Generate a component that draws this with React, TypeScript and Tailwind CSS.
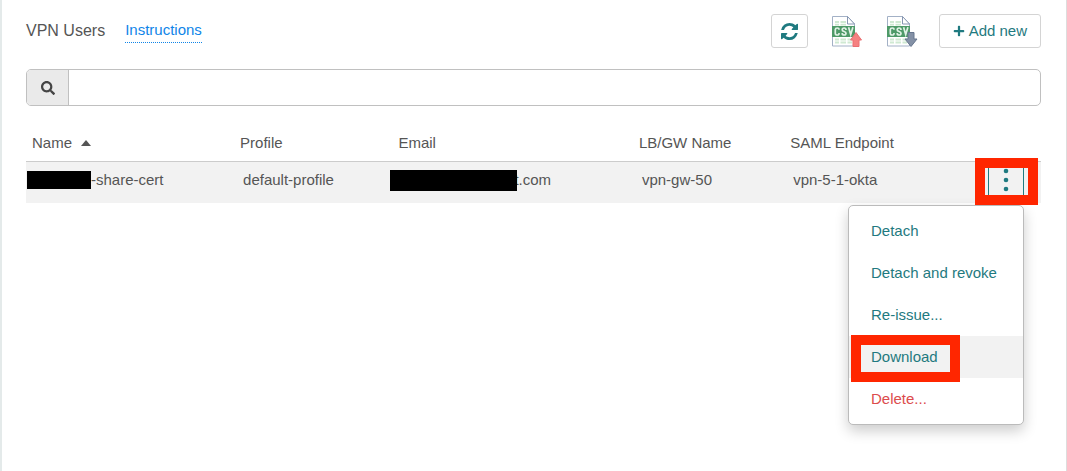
import { FaPlus, FaSearch } from "react-icons/fa";

const actions = ["Detach", "Detach and revoke", "Re-issue...", "Download", "Delete..."];

function RefreshIcon() {
  return (
    <svg viewBox="0 0 1536 1536" className="size-[17px]" fill="currentColor" aria-hidden="true">
      <path d="M1511 928q0 5-1 7-64 268-268 434.500T764 1536q-146 0-282.500-55T238 1324l-129 129q-19 19-45 19t-45-19-19-45V960q0-26 19-45t45-19h448q26 0 45 19t19 45-19 45l-137 137q71 66 161 102t187 36q134 0 250-65t186-179q11-17 53-117 8-23 30-23h192q13 0 22.500 9.500t9.500 22.500zm25-800v448q0 26-19 45t-45 19h-448q-26 0-45-19t-19-45 19-45l138-138Q969 256 768 256q-134 0-250 65T332 500q-11 17-53 117-8 23-30 23H50q-13 0-22.500-9.500T18 608v-7q65-268 270-434.500T768 0q146 0 284 55.500T1297 212l130-129q19-19 45-19t45 19 19 45z" />
    </svg>
  );
}

function CsvIcon({ direction }: { direction: "up" | "down" }) {
  return (
    <svg viewBox="0 0 32 33" className="h-[33px] w-8" aria-hidden="true">
      <path d="M1.500 1.500h15l7 7.500v22h-22z" fill="#fff" stroke="#a3b1c6" />
      <path d="M4 6h4v2H4zM9.500 6H15v2H9.500zM4 8.700h4v1.800H4zM9.500 8.700H15v1.800H9.500zM4 23.500h4v2H4zM9.500 23.500H15v2H9.500zM16.500 23.500H21v2h-4.500zM4 26.500h4v2H4zM9.500 26.500H15v2H9.500zM16.500 26.500H21v2h-4.500z" fill="#cfe9d2" />
      <path d="M16.500 1.500V9h7z" fill="#fff" stroke="#8797b2" strokeLinejoin="round" />
      <path d="M1 11h23v11H1z" fill="#4e9a68" />
      <g fill="none" stroke="#e0f1e5" strokeWidth="1.700">
        <path d="M8 14.800v-.4q0-1.400-1.800-1.400t-1.900 1.600v3.800q0 1.600 1.900 1.600T8 18.600v-.6" />
        <path d="M15 14.900q0-1.900-1.900-1.900t-1.900 1.700q0 1.300 1.900 1.800t1.900 1.800q0 1.700-1.900 1.700t-2-1.900" />
        <path d="m17.600 12.300 2.100 7.200 2.200-7.200" />
      </g>
      {direction === "up" ? (
        <path d="m25 17.500 5.500 7.500H28v6.500h-6V25h-2.500z" fill="#f58181" stroke="#ea6e72" />
      ) : (
        <path d="M22 17.500h6V24h3l-6 7.500-6-7.500h3z" fill="#8491a6" stroke="#66768e" />
      )}
    </svg>
  );
}

export default function App() {
  return (
    <div className="min-h-screen bg-[#e4eaea] pl-[2px] font-['Liberation_Sans',Arial,sans-serif] text-[15px] leading-5 text-[#555]">
      <main className="min-h-screen border-r border-[#ddd] bg-white pt-[14px] pr-[25px] pl-6">
        <header className="flex h-[34px] items-center">
          <h1 className="text-base">VPN Users</h1>
          <a href="#instructions" className="ml-5 border-b border-dotted border-[#0f85e8] pb-[2px] text-[#0f85e8]">
            Instructions
          </a>
          <div className="ml-auto flex items-center">
            <button type="button" aria-label="Refresh" className="flex h-[34px] w-[37px] items-center justify-center rounded-[3px] border border-[#d4d4d4] text-[#1f7a80]">
              <RefreshIcon />
            </button>
            <button type="button" aria-label="Import CSV" className="ml-[23px]">
              <CsvIcon direction="up" />
            </button>
            <button type="button" aria-label="Export CSV" className="ml-[23px]">
              <CsvIcon direction="down" />
            </button>
            <button type="button" className="ml-[21px] flex h-[34px] items-center gap-1 rounded-[3px] border border-[#d4d4d4] px-[13px] text-[#1f7a80]">
              <FaPlus className="size-3" />
              Add new
            </button>
          </div>
        </header>

        <div className="mt-[21px] flex h-[37px] overflow-hidden rounded-[5px] border border-[#c0c0c0]">
          <label htmlFor="search" aria-label="Search" className="flex w-[42px] items-center justify-center border-r border-[#c0c0c0] bg-[#eaeaea] text-[#444]">
            <FaSearch className="size-[14px]" />
          </label>
          <input id="search" type="text" className="min-w-0 flex-1 px-3 outline-none" />
        </div>

        <table className="mt-5 w-full table-fixed text-left">
          <colgroup>
            <col className="w-[20.5%]" />
            <col className="w-[15.6%]" />
            <col className="w-[23.7%]" />
            <col className="w-[14.9%]" />
            <col />
            <col className="w-[66px]" />
          </colgroup>
          <thead>
            <tr className="h-[35px] border-b border-[#ccc] [&>th]:px-[6px] [&>th]:font-normal">
              <th>
                <span className="flex items-center gap-[9px]">
                  Name
                  <svg viewBox="0 0 10 6" className="h-[6px] w-[10px]" fill="#555" aria-hidden="true">
                    <path d="M5 0l5 6H0z" />
                  </svg>
                </span>
              </th>
              <th>Profile</th>
              <th>Email</th>
              <th>LB/GW Name</th>
              <th>SAML Endpoint</th>
              <th aria-label="Actions" />
            </tr>
          </thead>
          <tbody>
            <tr className="h-[42px] bg-[#f2f2f2] [&>td]:px-[9px] [&>td]:pb-1">
              <td>
                <span className="-ml-2 flex items-center">
                  <span className="h-[18px] w-16 bg-black" />
                  -share-cert
                </span>
              </td>
              <td>default-profile</td>
              <td>
                <span className="-ml-[11px] flex items-start">
                  <span className="relative -mr-[3px] -mb-[2px] h-[21px] w-[127px] bg-black" />
                  t.com
                </span>
              </td>
              <td>vpn-gw-50</td>
              <td>vpn-5-1-okta</td>
              <td>
                <div className="relative mr-2 flex justify-end">
                  <button type="button" aria-label="Row actions" className="flex h-[34px] w-9 items-center justify-center border border-[#1f7a80] text-[#1f7a80]">
                    <svg viewBox="0 0 6 24" className="h-6 w-[6px]" fill="currentColor" aria-hidden="true">
                      <circle cx="3" cy="3" r="2.300" />
                      <circle cx="3" cy="12" r="2.300" />
                      <circle cx="3" cy="21" r="2.300" />
                    </svg>
                  </button>
                  <span className="pointer-events-none absolute -top-[5px] -right-[14px] z-20 h-[47px] w-[63px] border-10 border-[#ff2600]" />
                  <ul className="absolute top-[42px] right-0 z-10 w-[176px] rounded-[5px] border border-[#bbb] bg-white py-1 shadow-[0_6px_14px_rgba(0,0,0,0.2)]">
                    {actions.map((action) => (
                      <li key={action} className={action === "Download" ? "relative bg-[#f2f2f2]" : "relative"}>
                        <button type="button" className={action === "Delete..." ? "h-[42px] w-full px-[22px] text-left text-[#dc4c4c]" : "h-[42px] w-full px-[22px] text-left text-[#1f7a80]"}>
                          {action}
                        </button>
                        {action === "Download" && (
                          <span className="pointer-events-none absolute -top-px left-[2px] h-[47px] w-[109px] border-10 border-[#ff2600]" />
                        )}
                      </li>
                    ))}
                  </ul>
                </div>
              </td>
            </tr>
          </tbody>
        </table>
      </main>
    </div>
  );
}
